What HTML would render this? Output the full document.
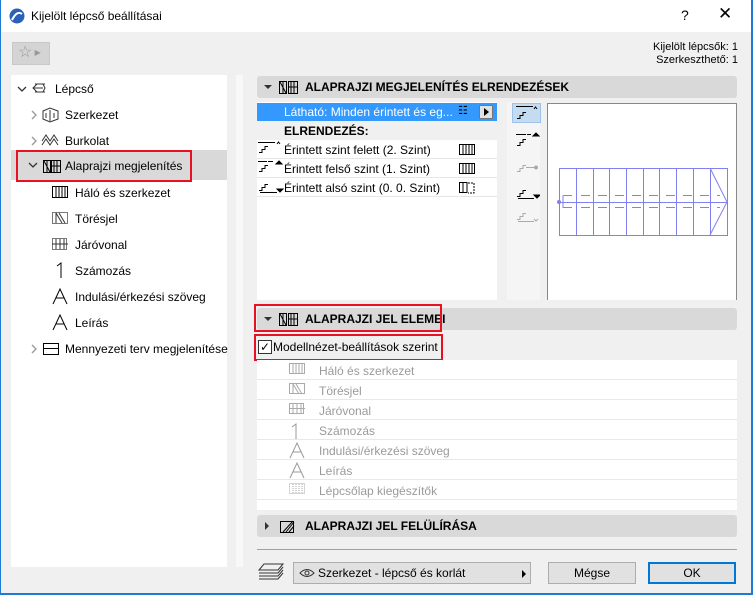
<!DOCTYPE html>
<html><head><meta charset="utf-8"><style>
*{box-sizing:border-box;margin:0;padding:0}
body{width:753px;height:595px;overflow:hidden;background:#f0f0f0;font-family:"Liberation Sans",sans-serif;font-size:12px;color:#000;position:relative}
.a{position:absolute}
.title{left:0;top:0;width:753px;height:32px;background:#fff;border-left:1px solid #1e7bd4;border-right:1px solid #1e7bd4}
.hdr{background:#d9d9d9;border-radius:3px;left:257px;width:480px;height:22px;font-weight:bold;font-size:12px}
.hdr .t{position:absolute;left:48px;top:4px}
.tri{position:absolute;width:0;height:0}
.red{border:2px solid #e81123}
.lbl{position:absolute;font-size:12px}
.gray{color:#9a9a9a}
.btn{background:#e1e1e1;border:1px solid #adadad;text-align:center;line-height:20px}
</style></head><body>
<div class="a title">
 <svg class="a" style="left:8px;top:8px" width="16" height="16"><circle cx="8" cy="8" r="7.5" fill="#2b5fb8"/><path d="M3 12 Q8 2 13 6" stroke="#fff" stroke-width="2" fill="none"/></svg>
 <div class="a" style="left:30px;top:9px;font-size:12px">Kijelölt lépcső beállításai</div>
 <div class="a" style="left:680px;top:7px;font-size:14px">?</div>
 <div class="a" style="left:717px;top:4px;font-size:17px">✕</div>
</div>
<div class="a" style="left:0;top:32px;width:1px;height:563px;background:#1e7bd4"></div>
<div class="a" style="left:751px;top:0;width:2px;height:595px;background:#1e7bd4"></div>
<div class="a" style="left:0;top:593px;width:753px;height:2px;background:#1e7bd4"></div>
<div class="a" style="left:12px;top:42px;width:38px;height:23px;background:#d4d4d4;border:1px solid #c8c8c8;color:#999;font-size:16px;padding-left:5px;line-height:20px">☆<span style="font-size:8px;vertical-align:2px"> ▶</span></div>
<div class="a" style="right:15px;top:41px;text-align:right;line-height:13px;font-size:11px">Kijelölt lépcsők: 1<br>Szerkeszthető: 1</div>

<!-- left tree -->
<div class="a" style="left:11px;top:75px;width:216px;height:492px;background:#fff"></div>
<div class="a" style="left:11px;top:150px;width:216px;height:30px;background:#d9d9d9"></div>
<div class="a red" style="left:16px;top:150px;width:176px;height:32px"></div>
<div class="a" style="left:236px;top:75px;width:7px;height:492px;background:#f8f8f8"></div>
<svg class="a" style="left:0;top:75px" width="230" height="300"><g fill="none" stroke-width="1.3">
<path d="M18 12L22 16L26 12" stroke="#333"/>
<path d="M32 36L36 40L32 44" stroke="#999"/>
<path d="M32 62L36 66L32 70" stroke="#999"/>
<path d="M29 88L33 92L37 88" stroke="#333"/>
<path d="M32 270L36 274L32 278" stroke="#999"/>
<path d="M35 9L45 9M33 13L43 13M35 17L45 17M37 9L33 13L37 17M43 9L45 13L43 17" stroke="#333" stroke-width="1"/>
<path d="M43 36L50 33L58 36L58 44L50 47L43 44ZM46 38V43M50 35V46M54 38V43" stroke="#333" stroke-width="1"/>
<path d="M42 66L46 60L50 66L54 60L58 66M42 70L46 64L50 70L54 64L58 70" stroke="#333" stroke-width="1"/>
<path d="M43.5 85.5H50.5V97.5H43.5ZM47 86V97M44 86L50 97" stroke="#000" stroke-width="1"/>
<path d="M51.5 85.5H60.5V97.5H51.5ZM54 86V97M57 86V97M51 91H61" stroke="#000" stroke-width="1"/>
</g></svg>
<div class="lbl" style="left:55px;top:82px">Lépcső</div>
<div class="lbl" style="left:65px;top:108px">Szerkezet</div>
<div class="lbl" style="left:65px;top:134px">Burkolat</div>
<div class="lbl" style="left:65px;top:159px">Alaprajzi megjelenítés</div>
<svg class="a" style="left:52px;top:186px" width="16" height="12"><rect x="0.5" y="0.5" width="15" height="11" fill="none" stroke="#000"/><path d="M4 1V11M7 1V11M10 1V11M13 1V11" stroke="#000"/></svg>
<div class="lbl" style="left:75px;top:186px">Háló és szerkezet</div>
<svg class="a" style="left:52px;top:212px" width="16" height="12"><rect x="0.5" y="0.5" width="15" height="11" fill="none" stroke="#777"/><path d="M4 1L10 11M7 1L13 11M4 1V11" stroke="#333"/></svg>
<div class="lbl" style="left:75px;top:212px">Törésjel</div>
<svg class="a" style="left:52px;top:238px" width="17" height="12"><rect x="0.5" y="0.5" width="14" height="11" fill="none" stroke="#777"/><path d="M0 6H16M4 1V11M8 1V11M12 1V11" stroke="#333"/></svg>
<div class="lbl" style="left:75px;top:238px">Járóvonal</div>
<svg class="a" style="left:55px;top:262px" width="10" height="17"><path d="M2 4L6 1V16" fill="none" stroke="#000"/></svg>
<div class="lbl" style="left:75px;top:264px">Számozás</div>
<svg class="a" style="left:52px;top:288px" width="16" height="17"><path d="M1 16L8 1L15 16M4 10H12" fill="none" stroke="#000"/></svg>
<div class="lbl" style="left:75px;top:290px">Indulási/érkezési szöveg</div>
<svg class="a" style="left:52px;top:314px" width="16" height="17"><path d="M1 16L8 1L15 16M4 10H12" fill="none" stroke="#000"/></svg>
<div class="lbl" style="left:75px;top:316px">Leírás</div>
<svg class="a" style="left:43px;top:343px" width="16" height="12"><rect x="0.5" y="0.5" width="15" height="11" fill="none" stroke="#000"/><path d="M0 5.5H16" stroke="#000"/></svg>
<div class="lbl" style="left:65px;top:342px">Mennyezeti terv megjelenítése</div>

<!-- header 1 -->
<div class="a hdr" style="top:76px"><div class="tri" style="left:7px;top:9px;border-left:4px solid transparent;border-right:4px solid transparent;border-top:4px solid #333"></div><svg class="a" style="left:22px;top:5px" width="20" height="13"><g fill="none" stroke="#000"><path d="M0.5 0.5H7.5V12.5H0.5ZM4 1V12M1 1L7 12"/><path d="M9.5 0.5H18.5V12.5H9.5ZM12 1V12M15 1V12M9 6H19"/></g></svg><div class="t">ALAPRAJZI MEGJELENÍTÉS ELRENDEZÉSEK</div></div>
<div class="a" style="left:257px;top:102px;width:240px;height:198px;background:#fff"></div>
<div class="a" style="left:257px;top:103px;width:240px;height:18px;background:#3399ff;color:#fff"><span class="a" style="left:27px;top:2px">Látható: Minden érintett és eg...</span><span class="a" style="left:201px;top:1px;font-size:11px;color:#000">☷</span><span class="a" style="left:222px;top:2px;width:14px;height:14px;background:#e1e1e1;border:1px solid #777"></span><span class="tri" style="left:227px;top:5px;border-top:4px solid transparent;border-bottom:4px solid transparent;border-left:5px solid #000"></span></div>
<div class="a" style="left:257px;top:121px;width:240px;height:19px;background:#f0f0f0;font-weight:bold"><span class="a" style="left:27px;top:3px">ELRENDEZÉS:</span></div>
<div class="a" style="left:257px;top:140px;width:240px;height:57px;border-bottom:1px solid #e6e6e6"></div>
<div class="a" style="left:257px;top:158px;width:240px;height:1px;background:#e6e6e6"></div>
<div class="a" style="left:257px;top:177px;width:240px;height:1px;background:#e6e6e6"></div>
<svg class="a" style="left:257px;top:140px" width="30" height="57"><g fill="none" stroke="#000"><path d="M2 12.5H5V9.5H8V6.5H11M1 2.5H18M20 4L21.5 2L23 4"/><path d="M2 31.5H5V28.5H8V25.5H11M1 21.5H10M11 21.5H16" /><path d="M19 24L22 21L25 24Z" fill="#000"/><path d="M2 50.5H5V47.5H8V44.5H11M3 52.5H20"/><path d="M20 49L23 52L26 49Z" fill="#000"/></g></svg>
<div class="lbl" style="left:284px;top:143px">Érintett szint felett (2. Szint)</div>
<div class="lbl" style="left:284px;top:162px">Érintett felső szint (1. Szint)</div>
<div class="lbl" style="left:284px;top:181px">Érintett alsó szint (0. 0. Szint)</div>
<svg class="a" style="left:459px;top:144px" width="16" height="50"><g fill="none" stroke="#000"><rect x="0.5" y="0.5" width="15" height="10"/><path d="M4 1V11M7 1V11M10 1V11M13 1V11"/><rect x="0.5" y="19.5" width="15" height="10"/><path d="M4 20V30M7 20V30M10 20V30M13 20V30"/><path d="M0.5 38.5H8V48.5H0.5ZM4 39V49"/><path d="M9 39H15V49H9" stroke-dasharray="2 1"/></g></svg>
<!-- toolbar -->
<div class="a" style="left:507px;top:102px;width:33px;height:198px;background:#f5f5f5"></div>
<div class="a" style="left:512px;top:103px;width:29px;height:20px;background:#c4dcf2;border:1px solid #9ec3ea"></div>
<svg class="a" style="left:514px;top:104px" width="26" height="120"><g fill="none" stroke="#000"><path d="M3 14.5H6V11.5H9V8.5H12M2 2.5H19M20 5L21.5 3L23 5"/><path d="M3 41.5H6V38.5H9V35.5H12M2 30.5H12M13 30.5H17"/><path d="M19 32L22 29L25 32Z" fill="#000"/></g><g fill="none" stroke="#aaa"><path d="M3 67.5H6V64.5H9V61.5H12M12 63.5H22"/><circle cx="22" cy="63.5" r="1.5" fill="#aaa"/></g><g fill="none" stroke="#000"><path d="M3 92.5H6V89.5H9V86.5H12M4 94.5H20"/><path d="M20 91L23 94L26 91Z" fill="#000"/></g><g fill="none" stroke="#aaa"><path d="M3 115.5H6V112.5H9V109.5H12M4 117.5H20M20 115L22 117L24 115"/></g></svg>
<!-- preview -->
<div class="a" style="left:547px;top:103px;width:190px;height:197px;background:#fff;border:1px solid #888;border-bottom:none"></div>
<svg class="a" style="left:0;top:0" width="753" height="300"><g stroke="#8080f0" fill="none" stroke-width="1"><rect x="559.5" y="168.5" width="168" height="67"/><path d="M576.5 168V235M593.5 168V235M609.5 168V235M626.5 168V235M643.5 168V235M659.5 168V235M676.5 168V235M693.5 168V235M710.5 168V235M710 168L727 202L710 235M559 202.5H727M563 195.5H572M563 195.5V207.5H572"/><path d="M581 195.5H720M581 207.5H720" stroke-dasharray="9 8"/></g><circle cx="559" cy="202" r="2" fill="#8080f0"/></svg>

<!-- header 2 -->
<div class="a hdr" style="top:308px"><div class="tri" style="left:7px;top:9px;border-left:4px solid transparent;border-right:4px solid transparent;border-top:4px solid #333"></div><svg class="a" style="left:22px;top:5px" width="20" height="13"><g fill="none" stroke="#000"><path d="M0.5 0.5H7.5V12.5H0.5ZM4 1V12M1 1L7 12"/><path d="M9.5 0.5H18.5V12.5H9.5ZM12 1V12M15 1V12M9 6H19"/></g></svg><div class="t">ALAPRAJZI JEL ELEMEI</div></div>
<div class="a red" style="left:254px;top:304px;width:188px;height:28px"></div>
<div class="a red" style="left:254px;top:334px;width:189px;height:27px"></div>
<div class="a" style="left:258px;top:340px;width:14px;height:14px;background:#fff;border:1px solid #333;font-size:12px;line-height:12px;text-align:center">✓</div>
<div class="lbl" style="left:273px;top:340px">Modellnézet-beállítások szerint</div>
<div class="a" style="left:257px;top:360px;width:480px;height:150px;background:#fff"></div>
<div class="a" style="left:257px;top:379px;width:480px;height:1px;background:#e8e8e8;box-shadow:0 20px 0 #e8e8e8,0 40px 0 #e8e8e8,0 60px 0 #e8e8e8,0 80px 0 #e8e8e8,0 100px 0 #e8e8e8,0 120px 0 #e8e8e8"></div>
<svg class="a" style="left:289px;top:363px" width="20" height="140"><g fill="none" stroke="#aaa"><rect x="0.5" y="0.5" width="15" height="10"/><path d="M4 1V11M7 1V11M10 1V11M13 1V11"/><rect x="0.5" y="20.5" width="15" height="10"/><path d="M4 21L10 31M7 21L13 31M4 21V31"/><rect x="0.5" y="40.5" width="14" height="10"/><path d="M0 45.5H16M4 41V51M8 41V51M12 41V51"/><path d="M3 64L7 61V76" stroke="#999"/><path d="M1 95L8 80L15 95M4 89H12" stroke="#999"/><path d="M1 115L8 100L15 115M4 109H12" stroke="#999"/><rect x="0.5" y="120.5" width="15" height="10" stroke-dasharray="1 1"/><path d="M4 121V131M7 121V131M10 121V131M13 121V131" stroke-dasharray="1 1"/></g></svg>
<div class="lbl gray" style="left:319px;top:364px">Háló és szerkezet</div>
<div class="lbl gray" style="left:319px;top:384px">Törésjel</div>
<div class="lbl gray" style="left:319px;top:404px">Járóvonal</div>
<div class="lbl gray" style="left:319px;top:424px">Számozás</div>
<div class="lbl gray" style="left:319px;top:444px">Indulási/érkezési szöveg</div>
<div class="lbl gray" style="left:319px;top:464px">Leírás</div>
<div class="lbl gray" style="left:319px;top:484px">Lépcsőlap kiegészítők</div>

<!-- header 3 -->
<div class="a hdr" style="top:515px"><div class="tri" style="left:8px;top:7px;border-top:4px solid transparent;border-bottom:4px solid transparent;border-left:4px solid #333"></div><svg class="a" style="left:22px;top:3px" width="18" height="16"><rect x="1.5" y="3.5" width="13" height="11" fill="none" stroke="#000"/><path d="M7 14L15 4M10 14L15 8M4 14L14 3" stroke="#000"/></svg><div class="t">ALAPRAJZI JEL FELÜLÍRÁSA</div></div>
<div class="a" style="left:257px;top:549px;width:480px;height:1px;background:#a0a0a0"></div>

<!-- bottom -->
<svg class="a" style="left:258px;top:563px" width="26" height="18"><g fill="none" stroke="#333"><path d="M6 1H25L20 7H1Z"/><path d="M1 10H20L25 4M1 13H20L25 7"/><path d="M1 16H20L25 10"/></g></svg>
<div class="a btn" style="left:293px;top:562px;width:238px;height:22px;text-align:left"><svg class="a" style="left:5px;top:5px" width="16" height="10"><path d="M1 5Q8 -2 15 5Q8 12 1 5Z" fill="none" stroke="#333"/><circle cx="8" cy="5" r="2" fill="none" stroke="#333"/></svg><span class="a" style="left:24px;top:0">Szerkezet - lépcső és korlát</span><span class="tri" style="left:228px;top:7px;border-top:4px solid transparent;border-bottom:4px solid transparent;border-left:4px solid #000"></span></div>
<div class="a btn" style="left:548px;top:562px;width:88px;height:22px">Mégse</div>
<div class="a btn" style="left:648px;top:562px;width:88px;height:22px;border:2px solid #0078d7;line-height:18px">OK</div>
</body></html>
